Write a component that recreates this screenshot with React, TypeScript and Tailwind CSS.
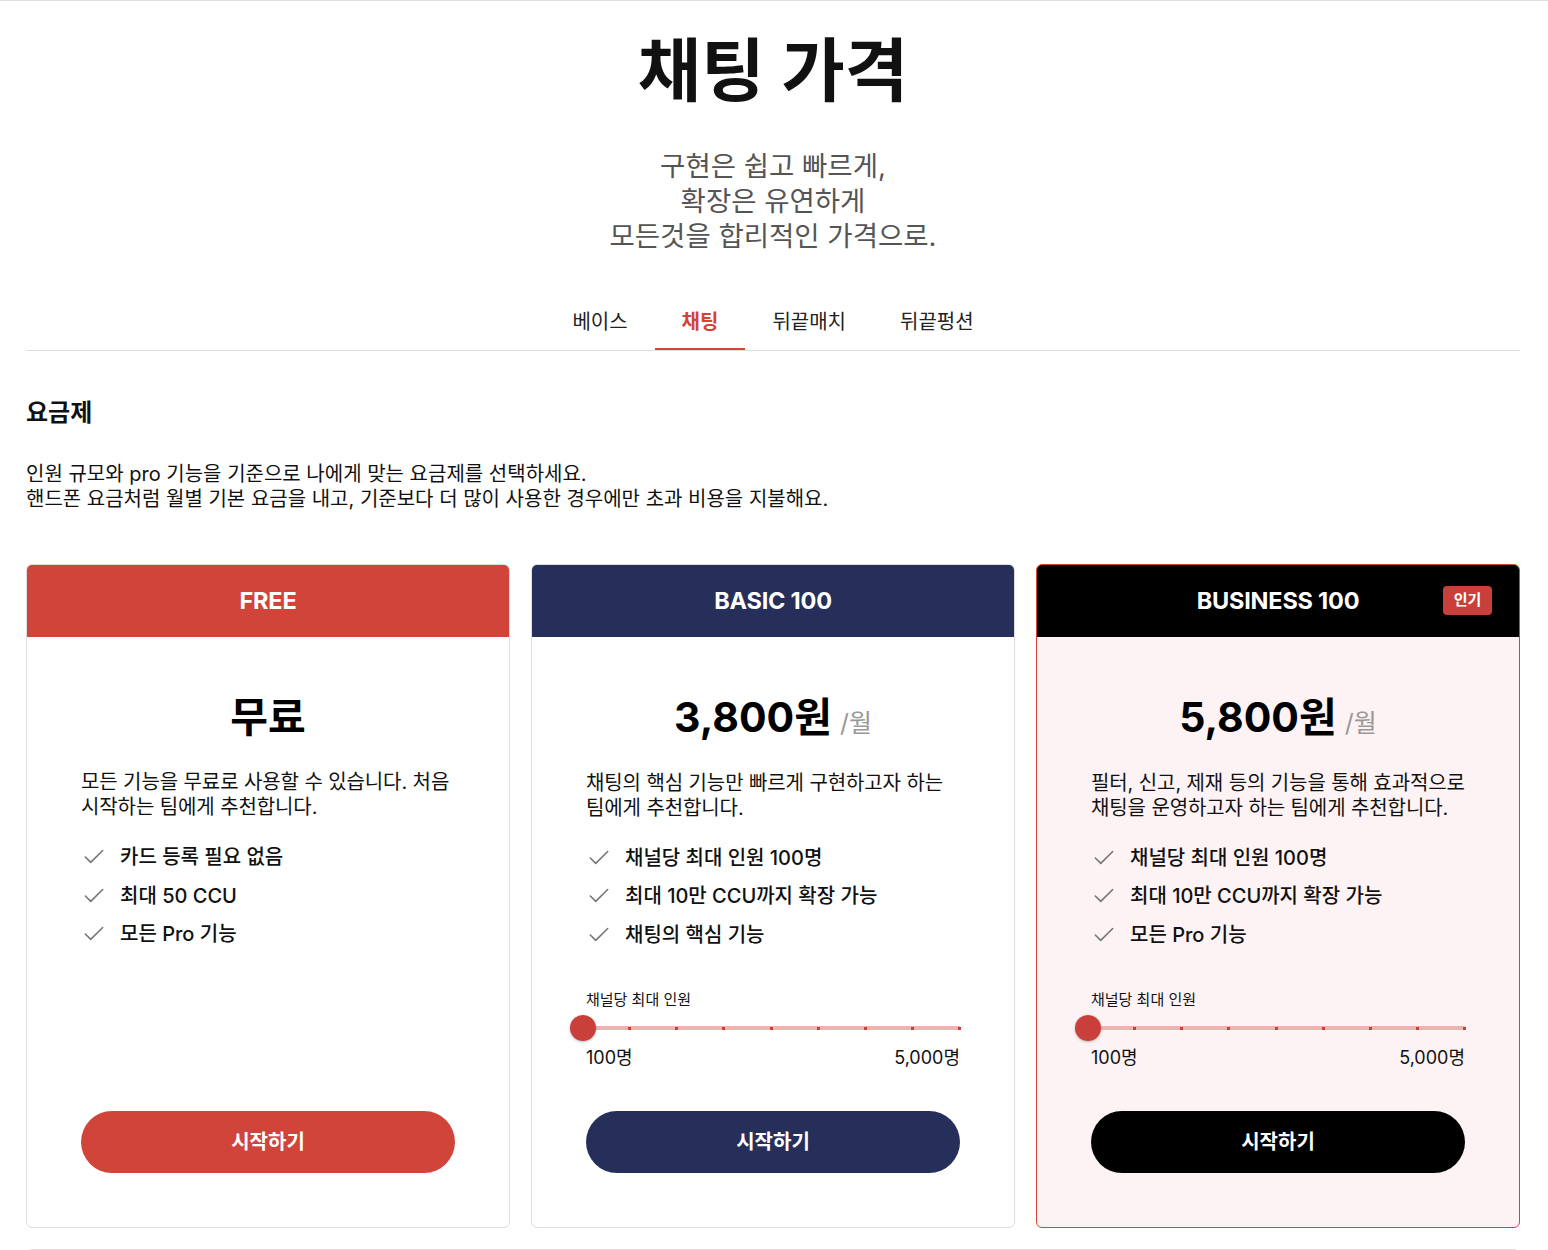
import { Check } from "lucide-react";

const FONT = { fontFamily: "Inter, 'Noto Sans CJK KR', sans-serif" };

type Plan = {
  name: string;
  header: string;
  button: string;
  price: string;
  unit?: string;
  desc: string[];
  features: string[];
  slider: boolean;
  popular?: boolean;
};

const plans: Plan[] = [
  {
    name: "FREE",
    header: "bg-[#d0443a]",
    button: "bg-[#d0443a]",
    price: "무료",
    desc: ["모든 기능을 무료로 사용할 수 있습니다. 처음", "시작하는 팀에게 추천합니다."],
    features: ["카드 등록 필요 없음", "최대 50 CCU", "모든 Pro 기능"],
    slider: false,
  },
  {
    name: "BASIC 100",
    header: "bg-[#262f5a]",
    button: "bg-[#262f5a]",
    price: "3,800원",
    unit: "/월",
    desc: ["채팅의 핵심 기능만 빠르게 구현하고자 하는", "팀에게 추천합니다."],
    features: ["채널당 최대 인원 100명", "최대 10만 CCU까지 확장 가능", "채팅의 핵심 기능"],
    slider: true,
  },
  {
    name: "BUSINESS 100",
    header: "bg-black",
    button: "bg-black",
    price: "5,800원",
    unit: "/월",
    desc: ["필터, 신고, 제재 등의 기능을 통해 효과적으로", "채팅을 운영하고자 하는 팀에게 추천합니다."],
    features: ["채널당 최대 인원 100명", "최대 10만 CCU까지 확장 가능", "모든 Pro 기능"],
    slider: true,
    popular: true,
  },
];

const tabs = ["베이스", "채팅", "뒤끝매치", "뒤끝펑션"];

function Slider() {
  const stops = Array.from({ length: 9 }, (_, i) => i);
  return (
    <div className="mt-[36px]">
      <div className="text-[15px] leading-[20px] text-[#111]">채널당 최대 인원</div>
      <div className="relative mt-[5px] h-[26px]">
        <div className="absolute left-[-3px] right-0 top-[11px] h-[4px] bg-[#ebb4b1]">
          {stops.map((i) => (
            <span
              key={i}
              className="absolute top-[0.5px] h-[3px] w-[3px] bg-[#c9403a]"
              style={{ left: `calc(${(i / 8) * 100}% - 2px)` }}
            />
          ))}
        </div>
        <div className="absolute left-[-16px] top-0 h-[26px] w-[26px] rounded-full bg-[#c9403a] shadow-[0_1px_3px_rgba(0,0,0,0.25)]" />
      </div>
      <div className="mt-[5px] flex justify-between text-[18px] leading-[24px] text-[#111]">
        <span>100명</span>
        <span>5,000명</span>
      </div>
    </div>
  );
}

function PlanCard({ plan }: { plan: Plan }) {
  return (
    <div
      className={`flex flex-col overflow-hidden rounded-[6px] border ${
        plan.popular ? "border-[#d0443a] bg-[#fdf3f4]" : "border-[#dddddd] bg-white"
      }`}
    >
      <div className={`relative flex h-[72px] items-center justify-center ${plan.header}`}>
        <span className="text-[23.5px] font-bold tracking-[-0.2px] text-white">{plan.name}</span>
        {plan.popular && (
          <span className="absolute right-[27px] top-[21px] flex h-[29px] w-[49px] items-center justify-center rounded-[4px] bg-[#c9403a] text-[15px] font-bold text-white">
            인기
          </span>
        )}
      </div>
      <div className="flex flex-1 flex-col px-[54px] pb-[54px] pt-[55px]">
        <div className="flex items-baseline justify-center gap-[8px]">
          <span className="text-[41px] font-bold leading-[50px] text-black">{plan.price}</span>
          {plan.unit && <span className="text-[25px] text-[#999999]">{plan.unit}</span>}
        </div>
        <p className="mt-[28px] whitespace-nowrap text-[20px] leading-[25px] tracking-[-0.1px] text-[#111]">
          {plan.desc[0]}
          <br />
          {plan.desc[1]}
        </p>
        <ul className="mt-[18px] flex flex-col">
          {plan.features.map((f) => (
            <li key={f} className="flex h-[38.5px] items-center gap-[13px]">
              <Check size={26} strokeWidth={1.5} className="text-[#777777]" />
              <span className="text-[20px] font-medium text-[#111]">{f}</span>
            </li>
          ))}
        </ul>
        {plan.slider && <Slider />}
        <div className="mt-auto pt-[41px]">
          <button className={`h-[62px] w-full rounded-full text-[20px] font-bold text-white ${plan.button}`}>
            시작하기
          </button>
        </div>
      </div>
    </div>
  );
}

export default function App() {
  return (
    <div className="min-h-screen border-t border-[#e0e0e0] bg-white pb-[40px]" style={FONT}>
      <div className="ml-[26px] mr-[28px]">
        <h1 className="mt-[30px] text-center text-[69px] font-bold leading-[80px] text-[#111]">채팅 가격</h1>
        <p className="mt-[38px] text-center text-[27.5px] leading-[35px] text-[#555555]">
          구현은 쉽고 빠르게,
          <br />
          확장은 유연하게
          <br />
          모든것을 합리적인 가격으로.
        </p>

        <div className="mt-[40px] flex justify-center border-b border-[#dddddd]">
          {tabs.map((t) => (
            <button
              key={t}
              className={`border-b-2 px-[27px] pb-[12px] pt-[14px] text-[20px] leading-[28px] ${
                t === "채팅" ? "border-[#d0443a] font-bold text-[#d0443a]" : "border-transparent text-[#222]"
              }`}
            >
              {t}
            </button>
          ))}
        </div>

        <h2 className="mt-[47px] text-[24px] font-bold leading-[30px] text-[#111]">요금제</h2>
        <p className="mt-[34px] text-[20px] leading-[25px] text-[#111]">
          인원 규모와 pro 기능을 기준으로 나에게 맞는 요금제를 선택하세요.
          <br />
          핸드폰 요금처럼 월별 기본 요금을 내고, 기준보다 더 많이 사용한 경우에만 초과 비용을 지불해요.
        </p>

        <div className="mt-[52px] grid grid-cols-3 gap-[21px]">
          {plans.map((p) => (
            <PlanCard key={p.name} plan={p} />
          ))}
        </div>

        <div className="mt-[21px] h-[60px] rounded-[6px] border border-[#dddddd]" />
      </div>
    </div>
  );
}
